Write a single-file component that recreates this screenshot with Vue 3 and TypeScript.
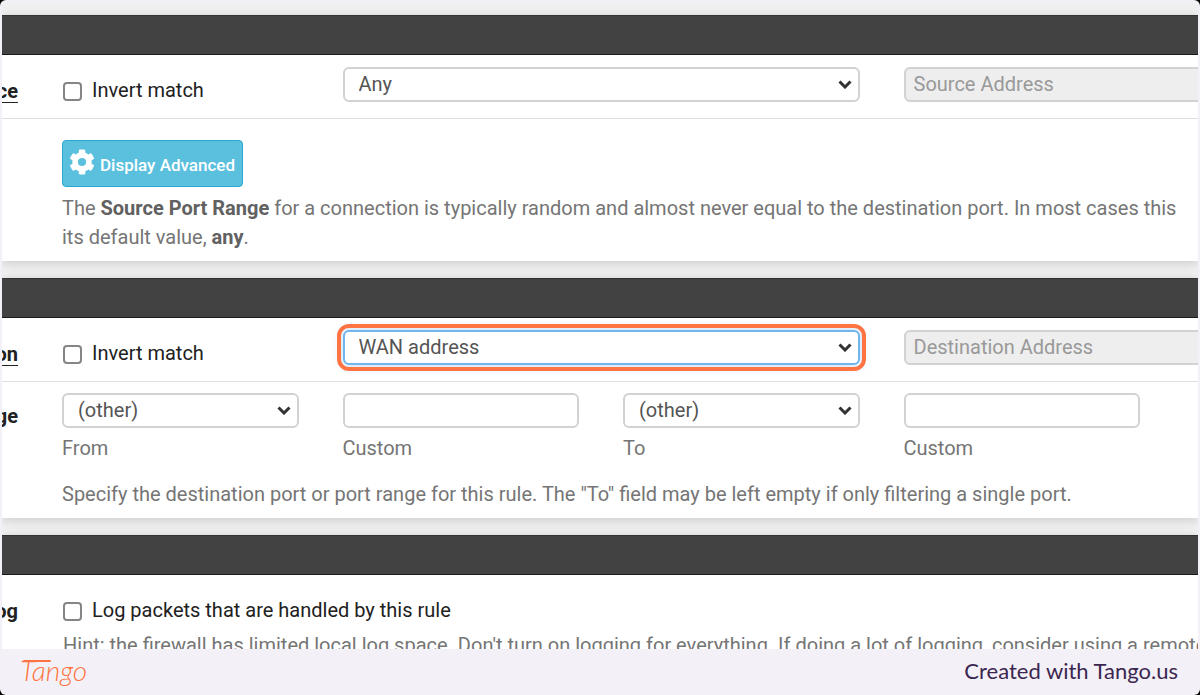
<script setup lang="ts">
import { ref } from 'vue'

const sourceInvert = ref(false)
const destinationInvert = ref(false)
const logPackets = ref(false)
const sourceType = ref('Any')
const destinationType = ref('WAN address')
const portFrom = ref('(other)')
const portTo = ref('(other)')
const customFrom = ref('')
const customTo = ref('')
</script>

<template>
  <div class="page">
    <main class="frame">
      <section class="panel">
        <header class="heading"></header>
        <div class="row ruled">
          <div class="name"><span class="underlined">Source</span></div>
          <div class="fields">
            <label class="check"><input v-model="sourceInvert" type="checkbox" />Invert match</label>
            <div class="select wide">
              <select v-model="sourceType" aria-label="Source type">
                <option>Any</option>
              </select>
              <svg class="chevron" viewBox="0 0 14 9"><path d="M1.5 1.5 7 7l5.500-5.500" /></svg>
            </div>
            <input class="box bleed" type="text" placeholder="Source Address" aria-label="Source Address" disabled />
          </div>
        </div>
        <div class="row advanced">
          <div class="name"></div>
          <div class="content">
            <button class="button" type="button">
              <svg class="gear" viewBox="0 0 512 512">
                <path
                  fill-rule="evenodd"
                  d="M487 315l-42-25a192 192 0 0 0 0-69l42-25c5-3 7-9 6-14-11-36-30-68-55-95-4-4-10-5-15-2l-42 24a188 188 0 0 0-60-34V26c0-6-4-11-9-12-36-8-74-8-110 0-5 1-9 6-9 12v49a194 194 0 0 0-60 34L91 85c-5-3-11-2-15 2-25 27-44 59-55 95-1 5 1 11 6 14l42 25a192 192 0 0 0 0 69l-42 25c-5 3-7 9-6 14 11 36 30 68 55 95 4 4 10 5 15 2l42-24a188 188 0 0 0 60 34v49c0 6 4 11 9 12 36 8 74 8 110 0 5-1 9-6 9-12v-49a194 194 0 0 0 60-34l42 24c5 3 11 2 15-2 25-27 44-59 55-95 1-5-1-11-6-14zM256 336a80 80 0 1 1 0-160 80 80 0 0 1 0 160z"
                />
              </svg>
              <span>Display Advanced</span>
            </button>
            <p class="help">
              The <b>Source Port Range</b> for a connection is typically random and almost never equal to the
              destination port. In most cases this<br />its default value, <b>any</b>.
            </p>
          </div>
        </div>
      </section>

      <section class="panel">
        <header class="heading"></header>
        <div class="row ruled">
          <div class="name"><span class="underlined">Destination</span></div>
          <div class="fields">
            <label class="check"><input v-model="destinationInvert" type="checkbox" />Invert match</label>
            <div class="select wide">
              <select v-model="destinationType" class="highlighted" aria-label="Destination type">
                <option>WAN address</option>
              </select>
              <svg class="chevron" viewBox="0 0 14 9"><path d="M1.5 1.5 7 7l5.500-5.500" /></svg>
            </div>
            <input
              class="box bleed"
              type="text"
              placeholder="Destination Address"
              aria-label="Destination Address"
              disabled
            />
          </div>
        </div>
        <div class="row ports">
          <div class="name">Destination Port Range</div>
          <div class="content">
            <div class="fields">
              <div class="field">
                <div class="select">
                  <select id="port-from" v-model="portFrom">
                    <option>(other)</option>
                  </select>
                  <svg class="chevron" viewBox="0 0 14 9"><path d="M1.5 1.5 7 7l5.500-5.500" /></svg>
                </div>
                <label for="port-from">From</label>
              </div>
              <div class="field">
                <input id="custom-from" v-model="customFrom" class="box" type="text" />
                <label for="custom-from">Custom</label>
              </div>
              <div class="field">
                <div class="select">
                  <select id="port-to" v-model="portTo">
                    <option>(other)</option>
                  </select>
                  <svg class="chevron" viewBox="0 0 14 9"><path d="M1.5 1.5 7 7l5.500-5.500" /></svg>
                </div>
                <label for="port-to">To</label>
              </div>
              <div class="field">
                <input id="custom-to" v-model="customTo" class="box" type="text" />
                <label for="custom-to">Custom</label>
              </div>
            </div>
            <p class="help">
              Specify the destination port or port range for this rule. The "To" field may be left empty if only
              filtering a single port.
            </p>
          </div>
        </div>
      </section>

      <section class="panel">
        <header class="heading"></header>
        <div class="row log">
          <div class="name">Log</div>
          <div class="content">
            <label class="check"><input v-model="logPackets" type="checkbox" />Log packets that are handled by this rule</label>
            <p class="help">
              Hint: the firewall has limited local log space. Don't turn on logging for everything. If doing a lot of
              logging, consider using a remote syslog server
            </p>
          </div>
        </div>
      </section>
    </main>

    <footer class="footer">
      <span class="brand">Tango</span>
      <span class="credit">Created with Tango.us</span>
    </footer>
  </div>
</template>

<style>
html,
body {
  background: #000;
}
</style>

<style scoped>
.page {
  box-sizing: border-box;
  display: flex;
  flex-direction: column;
  height: 100vh;
  padding: 2px 2px 0;
  overflow: hidden;
  border-radius: 6px;
  background: #f3f1f7;
  color: #212121;
  font-family: Roboto, "Liberation Sans", sans-serif;
  font-size: 20px;
  line-height: 29px;
}

.frame {
  display: flex;
  flex: 1;
  flex-direction: column;
  gap: 17px;
  min-height: 0;
  padding-top: 13px;
  overflow: hidden;
  border-radius: 6px 6px 0 0;
  background: #f0f0f0;
}

.panel {
  flex: none;
  background: #fff;
  box-shadow: 0 2px 10px rgba(0, 0, 0, 0.16);
}

.panel:last-child {
  flex: 1 0 auto;
}

.heading {
  box-sizing: border-box;
  height: 40px;
  border-top: 1px solid #333;
  border-bottom: 1px solid #1c1c1c;
  background: #424242;
}

.row {
  display: grid;
  grid-template-columns: 16px minmax(0, 1fr);
  column-gap: 44px;
}

.ruled {
  padding: 12px 0 15px;
  border-bottom: 1px solid #e0e0e0;
}

.name {
  display: flex;
  align-items: flex-start;
  justify-content: flex-end;
  padding-top: 10px;
  font-weight: 700;
  white-space: nowrap;
}

.underlined {
  height: 25px;
  border-bottom: 1px solid #212121;
}

.content {
  min-width: 0;
}

.fields {
  display: grid;
  grid-template-columns: repeat(4, minmax(0, 1fr));
  column-gap: 44px;
  padding-right: 58px;
}

.check {
  display: flex;
  gap: 10px;
  align-items: center;
  height: 25px;
  padding: 11px 0 0 1px;
}

.check input {
  flex: none;
  box-sizing: border-box;
  width: 19px;
  height: 19px;
  margin: 2px 0 0;
  border: 2px solid #858585;
  border-radius: 4px;
  appearance: none;
  background: #fff;
}

.check input:checked {
  background: #5bc0de;
}

.select {
  position: relative;
}

.wide {
  grid-column: span 2;
}

.select select,
.box {
  display: block;
  box-sizing: border-box;
  width: 100%;
  height: 35px;
  margin: 0;
  border: 2px solid #d2d2d2;
  border-radius: 6px;
  background: #fff;
  color: #555;
  font: inherit;
}

.select select {
  padding: 0 40px 0 14px;
  appearance: none;
}

.select .highlighted {
  border-color: #72b4ee;
  outline: 4px solid #ff7442;
  outline-offset: 2px;
  box-shadow: 0 0 12px rgba(102, 175, 233, 0.5);
}

.chevron {
  position: absolute;
  top: 13px;
  right: 8px;
  width: 14px;
  height: 9px;
  fill: none;
  stroke: #333;
  stroke-width: 3;
  pointer-events: none;
}

.box {
  padding: 0 8px 2px;
}

.box:disabled {
  background: #eee;
}

.box::placeholder {
  color: #999;
  opacity: 1;
}

.bleed {
  width: calc(100% + 80px);
}

.help {
  margin: 0;
  color: #757575;
  white-space: nowrap;
}

.help b {
  color: #616161;
  font-weight: 700;
}

.advanced {
  padding: 21px 0 9px;
}

.button {
  display: flex;
  gap: 5px;
  align-items: center;
  box-sizing: border-box;
  height: 47px;
  margin: 0 0 7px;
  padding: 0 7px 0 6px;
  border: 1px solid #28a9d0;
  border-radius: 4px;
  background: #5bc0de;
  color: #fff;
  font-family: inherit;
  font-size: 17px;
  font-weight: 500;
  line-height: 29px;
}

.button span {
  padding-top: 4px;
}

.gear {
  width: 26px;
  height: 26px;
  margin-bottom: 4px;
  fill: #fff;
}

.ports {
  padding: 11px 0 9px;
}

.ports .name {
  padding-top: 9px;
}

.field {
  display: flex;
  flex-direction: column;
  gap: 6px;
  margin-bottom: 17px;
  color: #757575;
}

.log {
  padding: 12px 0 9px;
}

.log .help {
  padding: 8px 0 0 1px;
}

.footer {
  display: flex;
  flex: none;
  align-items: center;
  justify-content: space-between;
  box-sizing: border-box;
  height: 46px;
  padding: 0 20px 4px 18px;
  color: #3b2650;
  font-family: Lato, "Liberation Sans", sans-serif;
  font-size: 22px;
}

.brand {
  position: relative;
  color: #ff7442;
  font-size: 28px;
  font-style: italic;
  font-weight: 300;
}

.brand::before {
  position: absolute;
  top: 4px;
  left: 3px;
  width: 28px;
  height: 2px;
  border-radius: 1px;
  background: #ff7442;
  content: "";
}
</style>
